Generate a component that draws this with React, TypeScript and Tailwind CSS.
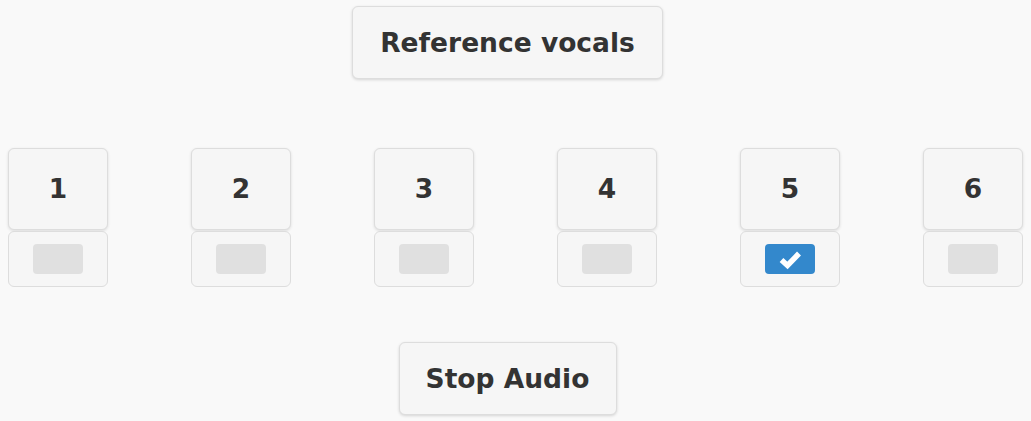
import React, { useState } from "react";

const font = { fontFamily: '"DejaVu Sans", sans-serif' };

function CheckIcon() {
  return (
    <svg width="24" height="22" viewBox="0 0 24 22">
      <path d="M3.5 12 L9.5 17.5 L21 5.5" fill="none" stroke="#fff" strokeWidth="5.5" strokeLinejoin="miter" strokeLinecap="butt" />
    </svg>
  );
}

export default function App() {
  const [checked, setChecked] = useState(5);
  const tracks = [1, 2, 3, 4, 5, 6];

  return (
    <div className="w-full h-[421px] bg-[#f9f9f9] flex flex-col items-center text-[#333]" style={font}>
      <button className="mt-[6px] mr-[16px] w-[311px] h-[73px] rounded-[6px] border border-[#dddddd] bg-[#f6f6f6] shadow-[0_1px_3px_rgba(0,0,0,0.15)] text-[26.5px] font-bold">
        Reference vocals
      </button>

      <div className="mt-[69px] w-full px-[8px] flex justify-between">
        {tracks.map((n) => (
          <div key={n} className="w-[100px] flex flex-col gap-[1px]">
            <button className="h-[82px] rounded-[6px] border border-[#dddddd] bg-[#f6f6f6] shadow-[0_1px_3px_rgba(0,0,0,0.12)] text-[26.5px] font-bold">
              {n}
            </button>
            <div
              className="h-[56px] rounded-[6px] border border-[#dddddd] bg-[#f6f6f6] flex items-center justify-center cursor-pointer"
              onClick={() => setChecked(n)}
            >
              {checked === n ? (
                <div className="w-[50px] h-[30px] rounded-[4px] bg-[#3388cc] flex items-center justify-center">
                  <CheckIcon />
                </div>
              ) : (
                <div className="w-[50px] h-[30px] rounded-[4px] bg-[#e0e0e0]" />
              )}
            </div>
          </div>
        ))}
      </div>

      <button className="mt-[55px] mr-[16px] w-[218px] h-[73px] rounded-[6px] border border-[#dddddd] bg-[#f6f6f6] shadow-[0_1px_3px_rgba(0,0,0,0.15)] text-[26.5px] font-bold">
        Stop Audio
      </button>
    </div>
  );
}
